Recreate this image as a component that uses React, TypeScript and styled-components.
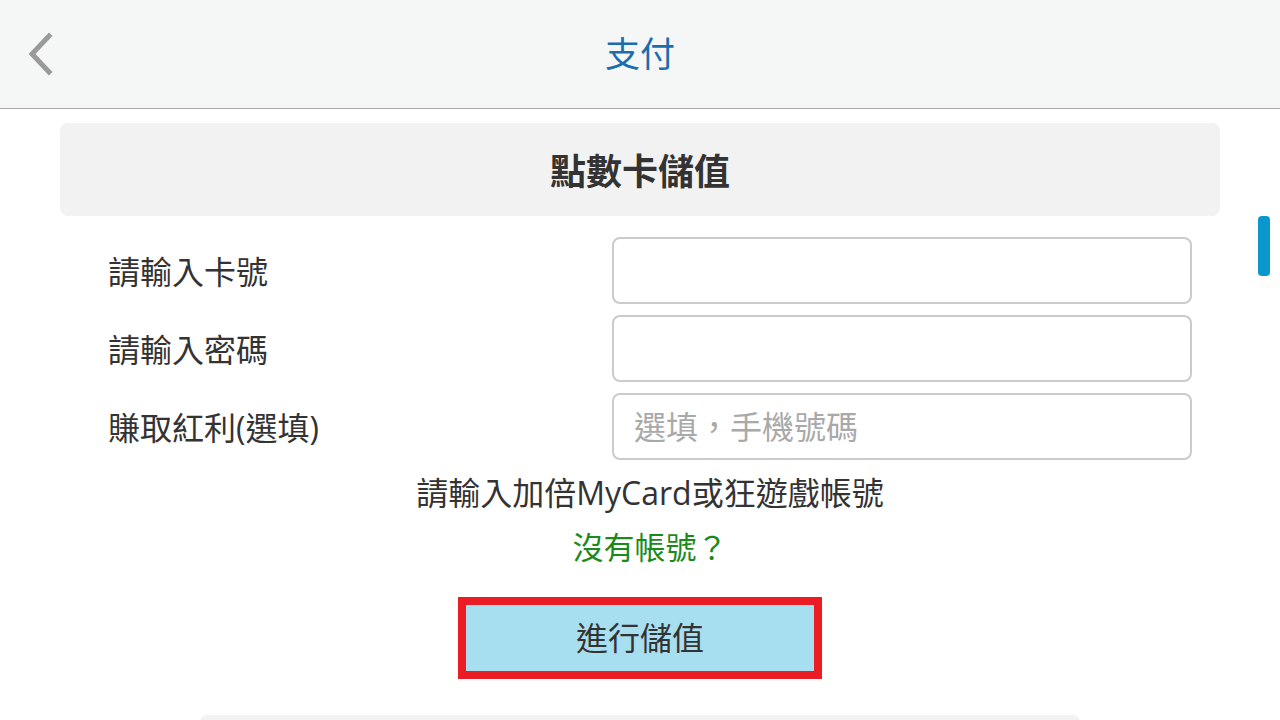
import styled, { createGlobalStyle } from "styled-components";

const GlobalStyle = createGlobalStyle`
  html, body {
    margin: 0;
    padding: 0;
    background: #fff;
    overflow: hidden;
  }
  body {
    font-family: "Open Sans", "Noto Sans CJK TC", sans-serif;
    color: #333;
  }
  * { box-sizing: border-box; }
`;

const fields = [
  { label: "請輸入卡號", placeholder: "" },
  { label: "請輸入密碼", placeholder: "" },
  { label: "賺取紅利(選填)", placeholder: "選填，手機號碼" },
];

export default function App() {
  return (
    <Page>
      <GlobalStyle />
      <Header>
        <BackButton aria-label="back">
          <svg width="30" height="44" viewBox="0 0 30 44">
            <path
              d="M24 4 L7 22 L24 40"
              fill="none"
              stroke="#9a9a9a"
              strokeWidth="5"
              strokeLinecap="square"
            />
          </svg>
        </BackButton>
        <Title>支付</Title>
      </Header>
      <Content>
        <SectionTitle>點數卡儲值</SectionTitle>
        <Form>
          {fields.map((f) => (
            <Row key={f.label}>
              <Label>{f.label}</Label>
              <Input placeholder={f.placeholder} />
            </Row>
          ))}
          <Notes>
            <Hint>請輸入加倍MyCard或狂遊戲帳號</Hint>
            <NoAccount>沒有帳號？</NoAccount>
          </Notes>
        </Form>
        <SubmitFrame>
          <SubmitButton>進行儲值</SubmitButton>
        </SubmitFrame>
        <NextCard />
      </Content>
      <ScrollThumb />
    </Page>
  );
}

const Page = styled.div`
  position: relative;
  width: 1280px;
  height: 720px;
  overflow: hidden;
`;

const Header = styled.header`
  position: relative;
  display: flex;
  align-items: center;
  justify-content: center;
  height: 109px;
  background: #f5f7f7;
  border-bottom: 1px solid #a8a8a8;
`;

const BackButton = styled.div`
  position: absolute;
  left: 25px;
  top: 32px;
  display: flex;
`;

const Title = styled.h1`
  margin: 0;
  font-size: 35px;
  font-weight: 400;
  color: #1a6eae;
  line-height: 1;
  padding-bottom: 2px;
`;

const Content = styled.main`
  display: flex;
  flex-direction: column;
  align-items: center;
  padding: 14px 60px 0;
`;

const SectionTitle = styled.h2`
  display: flex;
  align-items: center;
  justify-content: center;
  width: 100%;
  height: 93px;
  margin: 0;
  background: #f2f2f2;
  border-radius: 8px;
  font-size: 36px;
  font-weight: 700;
  color: #333;
`;

const Form = styled.div`
  display: flex;
  flex-direction: column;
  gap: 11px;
  width: 100%;
  padding: 21px 28px 0 48px;
`;

const Row = styled.div`
  display: flex;
  align-items: center;
  justify-content: space-between;
`;

const Label = styled.span`
  font-size: 32px;
  color: #333;
  padding-bottom: 2px;
`;

const Input = styled.input`
  width: 580px;
  height: 67px;
  border: 2px solid #cbcbcb;
  border-radius: 8px;
  padding: 0 20px;
  font-family: inherit;
  font-size: 32px;
  color: #333;
  outline: none;
  &::placeholder {
    color: #a9a9a9;
  }
`;

const Notes = styled.div`
  display: flex;
  flex-direction: column;
  align-items: center;
  gap: 14px;
  margin-top: 2px;
`;

const Hint = styled.p`
  margin: 0;
  font-size: 32px;
  line-height: 40px;
  color: #333;
`;

const NoAccount = styled.a`
  font-size: 31px;
  line-height: 40px;
  color: #1a8a1a;
  cursor: pointer;
`;

const SubmitFrame = styled.div`
  margin-top: 30px;
  border: 8px solid #ec1c24;
`;

const SubmitButton = styled.button`
  display: flex;
  align-items: center;
  justify-content: center;
  width: 348px;
  height: 66px;
  border: none;
  background: #a8dff0;
  font-family: inherit;
  font-size: 32px;
  color: #333;
  padding: 0 0 4px;
`;

const NextCard = styled.div`
  width: 880px;
  height: 40px;
  margin-top: 36px;
  background: #f2f2f2;
  border-radius: 8px;
`;

const ScrollThumb = styled.div`
  position: absolute;
  right: 10px;
  top: 216px;
  width: 12px;
  height: 60px;
  border-radius: 4px;
  background: #0a97cd;
`;
